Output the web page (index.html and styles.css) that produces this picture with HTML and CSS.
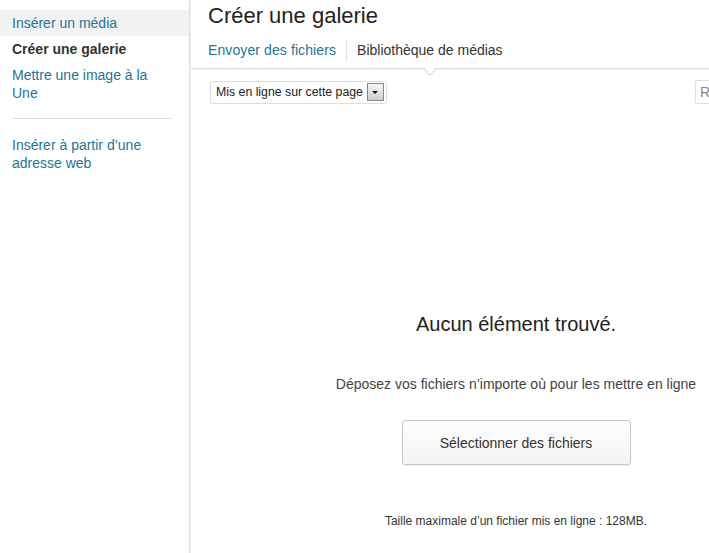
FILE: index.html
```html
<html>
<head>
<meta charset="utf-8">
<meta name="viewport" content="width=device-width, initial-scale=1">
<title>Créer une galerie</title>
<link rel="stylesheet" href="styles.css">
</head>
<body>
<div class="frame">
  <div class="menu">
    <a class="menu-item hover" href="#">Insérer un média</a>
    <a class="menu-item active" href="#">Créer une galerie</a>
    <a class="menu-item" href="#">Mettre une image à la Une</a>
    <div class="separator"></div>
    <a class="menu-item" href="#">Insérer à partir d’une adresse web</a>
  </div>
  <div class="content">
    <h1 class="title">Créer une galerie</h1>
    <div class="router">
      <a class="tab" href="#">Envoyer des fichiers</a>
      <span class="tab-sep"></span>
      <a class="tab current" href="#">Bibliothèque de médias</a>
    </div>
    <div class="toolbar">
      <div class="select">
        <span>Mis en ligne sur cette page</span>
        <span class="select-btn"><span class="caret"></span></span>
      </div>
      <input class="search" type="search" placeholder="Rechercher">
    </div>
    <div class="uploader">
      <h2>Aucun élément trouvé.</h2>
      <p class="drop">Déposez vos fichiers n’importe où pour les mettre en ligne</p>
      <button class="browser">Sélectionner des fichiers</button>
      <p class="max">Taille maximale d’un fichier mis en ligne : 128MB.</p>
    </div>
  </div>
</div>
</body>
</html>
```
FILE: styles.css
```css
body {
  margin: 0;
  width: 709px;
  height: 553px;
  overflow: hidden;
  background: #fff;
  font-family: "Liberation Sans", Arial, sans-serif;
  color: #333;
}
.frame {
  display: flex;
  width: 840px;
  height: 553px;
}
.menu {
  width: 189px;
  flex-shrink: 0;
  padding-top: 10px;
  border-right: 1px solid #dcdcdc;
  box-shadow: 1px 0 0 #f0f0f0;
  box-sizing: content-box;
}
.menu-item {
  display: block;
  padding: 4px 20px 4px 12px;
  font-size: 14px;
  line-height: 18px;
  color: #21759b;
  text-decoration: none;
}
.menu-item.hover {
  background: #f2f2f2;
}
.menu-item.active {
  color: #333;
  font-weight: bold;
}
.separator {
  height: 1px;
  margin: 12px 18px 13px 12px;
  background: #dcdcdc;
}
.content {
  width: 650px;
  flex-shrink: 0;
  margin-left: 1px;
}
.title {
  margin: 0;
  padding: 0 17px;
  font-size: 22px;
  font-weight: normal;
  line-height: 32px;
  color: #222;
}
.router {
  position: relative;
  display: flex;
  align-items: center;
  height: 36px;
  padding: 0 6px;
  border-bottom: 1px solid #dcdcdc;
  box-shadow: 0 1px 1px rgba(0,0,0,0.04);
}
.tab {
  padding: 0 10px 0 11px;
  font-size: 14px;
  line-height: 18px;
  letter-spacing: 0.1px;
  color: #21759b;
  text-decoration: none;
}
.tab.current {
  position: relative;
  padding-left: 10px;
  letter-spacing: 0;
  color: #333;
}
.tab.current:after {
  content: "";
  position: absolute;
  left: 50%;
  bottom: -15px;
  width: 7px;
  height: 7px;
  margin-left: -4px;
  background: #fff;
  border-right: 1px solid #dcdcdc;
  border-bottom: 1px solid #dcdcdc;
  transform: rotate(45deg);
}
.tab-sep {
  width: 1px;
  height: 23px;
  background: #e2e2e2;
}
.toolbar {
  display: flex;
  justify-content: space-between;
  align-items: center;
  padding: 11px 16px 0 19px;
}
.select {
  display: flex;
  align-items: center;
  gap: 4px;
  height: 21px;
  padding: 0 2px 0 5px;
  border: 1px solid #ddd;
  border-radius: 2px;
  font-size: 12.3px;
  color: #222;
}
.select-btn {
  display: flex;
  align-items: center;
  justify-content: center;
  width: 15px;
  height: 16px;
  border: 1px solid #888;
  background: linear-gradient(#f4f4f4, #cfcfcf);
}
.caret {
  width: 0;
  height: 0;
  border-left: 3px solid transparent;
  border-right: 3px solid transparent;
  border-top: 3px solid #111;
}
.search {
  width: 130px;
  height: 24px;
  padding: 0 4px;
  border: 1px solid #ddd;
  border-radius: 2px;
  font-family: "Liberation Sans", Arial, sans-serif;
  font-size: 14px;
  box-sizing: border-box;
}
.search::placeholder {
  color: #888;
}
.uploader {
  display: flex;
  flex-direction: column;
  align-items: center;
  padding-top: 208px;
}
.uploader h2 {
  margin: 0;
  font-size: 20px;
  font-weight: normal;
  line-height: 24px;
  color: #222;
}
.drop {
  margin: 38px 0 0;
  font-size: 14px;
  line-height: 20px;
  color: #444;
}
.browser {
  width: 229px;
  height: 45px;
  margin-top: 26px;
  border: 1px solid #c8c8c8;
  border-radius: 3px;
  background: linear-gradient(#fefefe, #f4f4f4);
  box-shadow: 0 1px 1px rgba(0,0,0,0.08);
  font-family: "Liberation Sans", Arial, sans-serif;
  font-size: 14px;
  color: #333;
}
.max {
  margin: 48px 0 0;
  font-size: 12px;
  line-height: 16px;
  color: #333;
}
```
